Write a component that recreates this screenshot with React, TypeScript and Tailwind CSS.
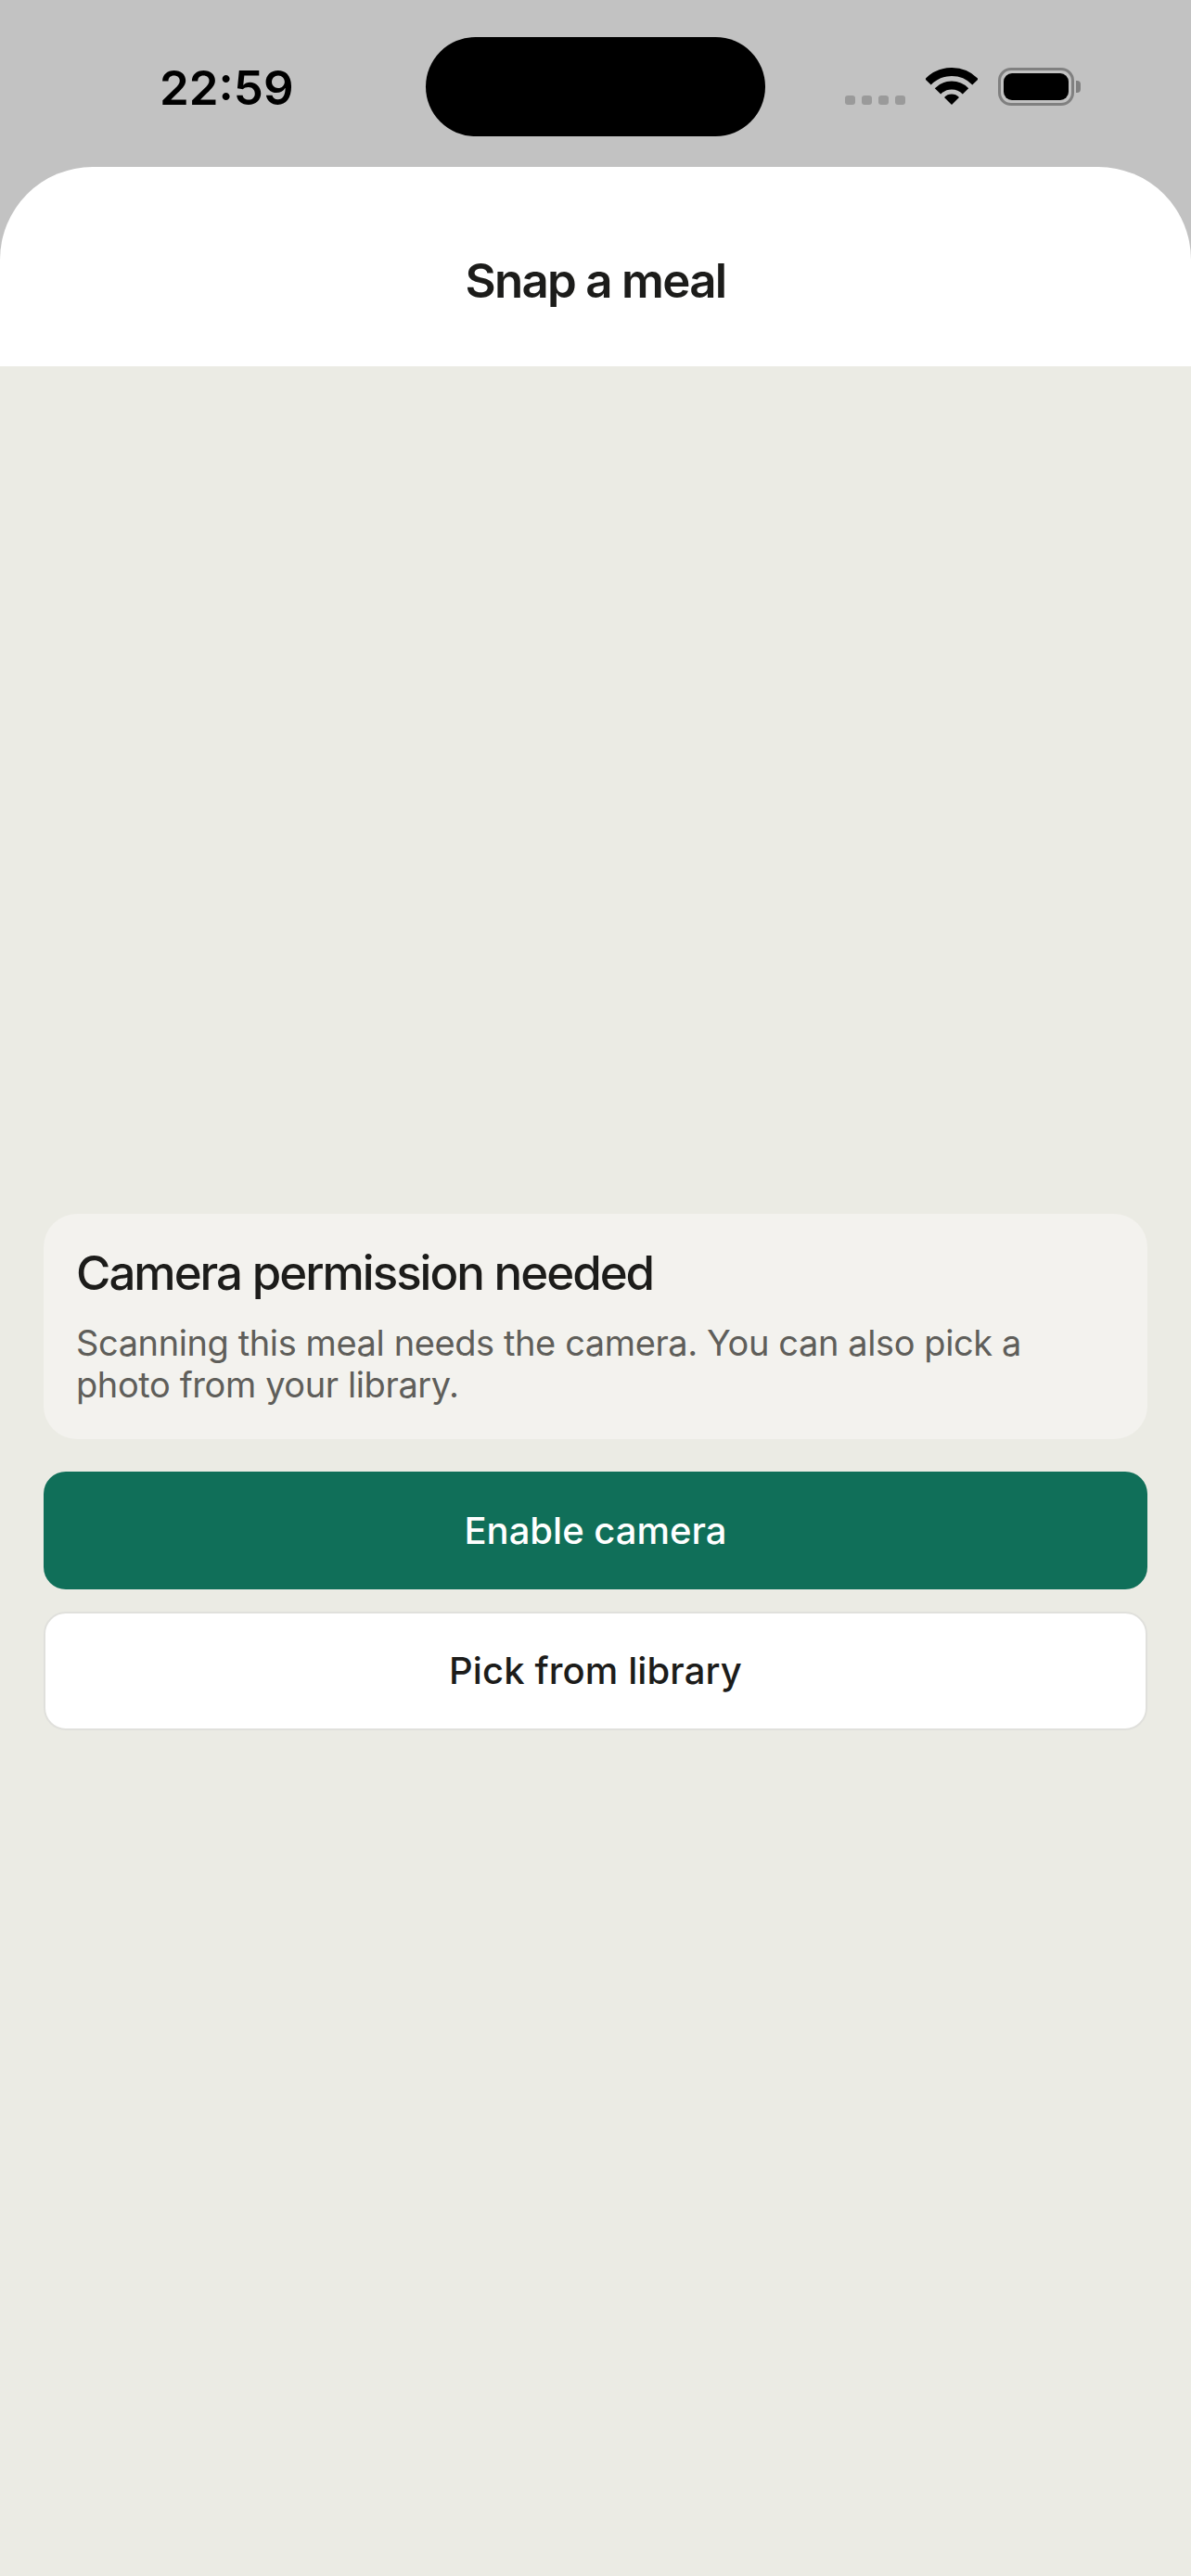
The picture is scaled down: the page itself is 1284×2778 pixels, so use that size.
export default function App() {
  return (
    <div className="flex h-[2778px] w-[1284px] flex-col overflow-hidden bg-[#ebebe4] font-['Inter','Liberation_Sans',sans-serif]">
      <div className="flex flex-col bg-[#c2c2c2]">
        <div className="flex h-[180px] items-start">
          <div className="w-[459px] pl-[172px] pt-[63px] text-[51px] font-semibold leading-[64px] text-black">22:59</div>
          <div className="mt-[40px] h-[107px] w-[366px] rounded-[54px] bg-black" />
          <div className="ml-[86px] mt-[103px] flex gap-[7px]">
            <div className="h-[10px] w-[11px] rounded-[3px] bg-[#9a9a9a]" />
            <div className="h-[10px] w-[11px] rounded-[3px] bg-[#9a9a9a]" />
            <div className="h-[10px] w-[11px] rounded-[3px] bg-[#9a9a9a]" />
            <div className="h-[10px] w-[11px] rounded-[3px] bg-[#9a9a9a]" />
          </div>
          <svg className="ml-[22px] mt-[73px] shrink-0" width="56" height="40" viewBox="0 0 56 40" fill="none">
            <path d="M2.5 15.3A35.5 35.5 0 0 1 53.5 15.3" stroke="#000" strokeWidth="9" />
            <path d="M13 25.4A21 21 0 0 1 43 25.4" stroke="#000" strokeWidth="9" />
            <path d="M28 40L20 32A11 11 0 0 1 36 32Z" fill="#000" />
          </svg>
          <div className="ml-[22px] mt-[73px] flex items-center gap-[2px]">
            <div className="h-[41px] w-[82px] rounded-[14px] border-[3px] border-[#808080] p-[3px]">
              <div className="h-full w-full rounded-[9px] bg-black" />
            </div>
            <div className="h-[13px] w-[5px] rounded-r-[4px] bg-[#808080]" />
          </div>
        </div>
        <div className="flex h-[215px] items-center justify-center rounded-t-[100px] bg-white pt-[30px]">
          <div className="text-[51px] font-semibold leading-[62px] tracking-[-1.7px] text-[#1c1c1a]">Snap a meal</div>
        </div>
      </div>
      <div className="flex flex-1 flex-col justify-center px-[47px] pt-[2px]">
        <div className="rounded-[36px] bg-[#f3f2ee] px-[35px] pb-[36px] pt-[36px]">
          <div className="text-[51px] font-medium leading-[56px] tracking-[-2px] text-[#1c1c1a]">Camera permission needed</div>
          <div className="mt-[25px] text-[38px] leading-[45px] tracking-[-0.4px] text-[#5f5e5a]">
            Scanning this meal needs the camera. You can also pick a photo from your library.
          </div>
        </div>
        <div className="mt-[35px] flex h-[127px] items-center justify-center rounded-[24px] bg-[#106f59] text-[40px] font-[450] text-white">
          Enable camera
        </div>
        <div className="mt-[24px] flex h-[128px] items-center justify-center rounded-[24px] border-2 border-[#e0e0dc] bg-white text-[40px] font-[450] tracking-[0.1px] text-[#1c1c1a]">
          Pick from library
        </div>
      </div>
    </div>
  );
}
